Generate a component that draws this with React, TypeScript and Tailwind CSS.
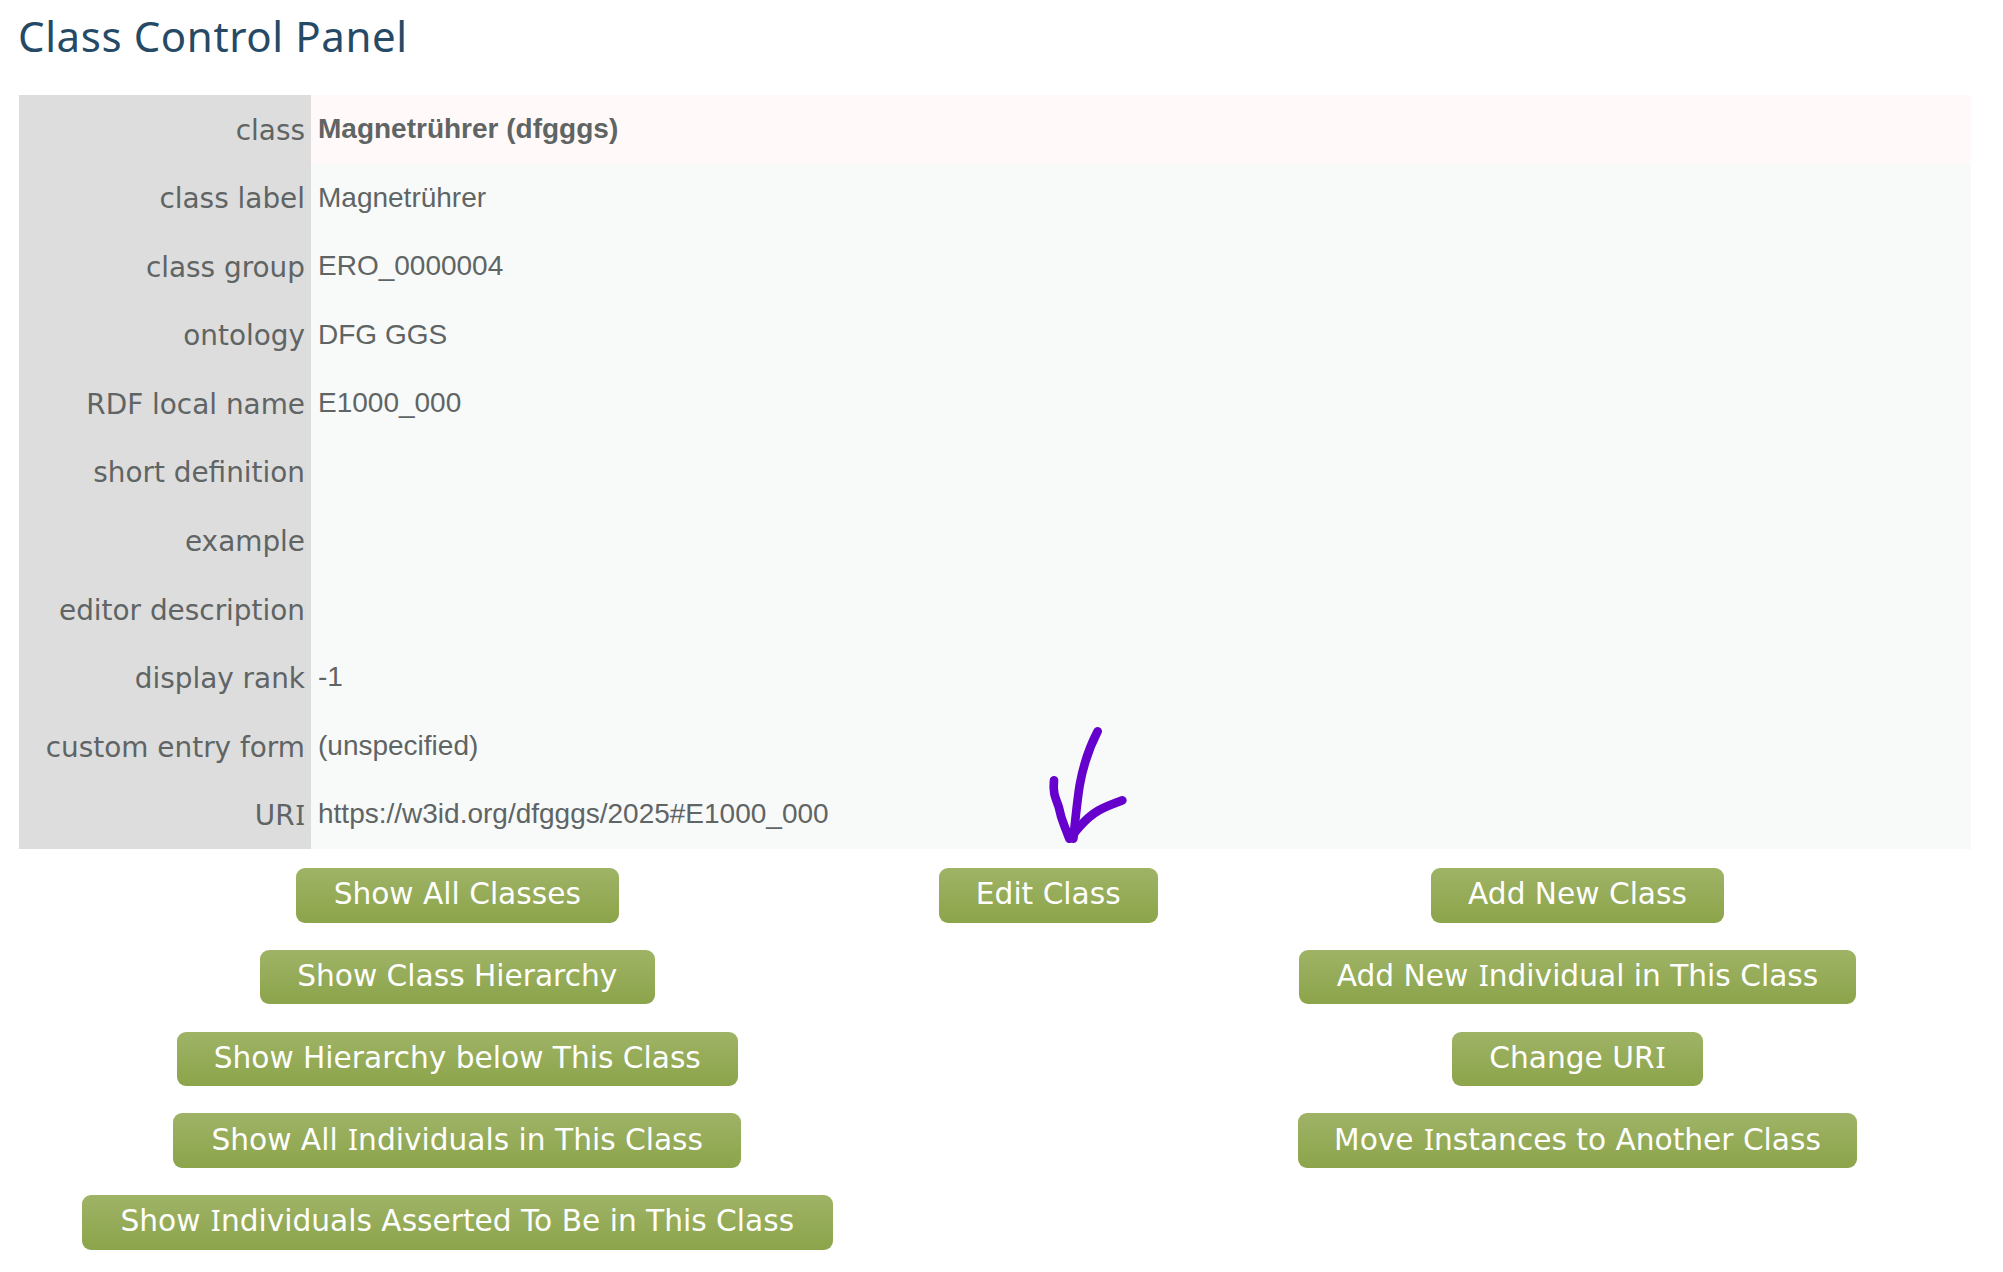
import { Fragment } from "react";

type Row = { label: string; value: string; strong?: boolean };

const rows: Row[] = [
  { label: "class", value: "Magnetrührer (dfgggs)", strong: true },
  { label: "class label", value: "Magnetrührer" },
  { label: "class group", value: "ERO_0000004" },
  { label: "ontology", value: "DFG GGS" },
  { label: "RDF local name", value: "E1000_000" },
  { label: "short definition", value: "" },
  { label: "example", value: "" },
  { label: "editor description", value: "" },
  { label: "display rank", value: "-1" },
  { label: "custom entry form", value: "(unspecified)" },
  { label: "URI", value: "https://w3id.org/dfgggs/2025#E1000_000" },
];

const browse = [
  { text: "Show All Classes", width: "w-[323px]" },
  { text: "Show Class Hierarchy", width: "w-[395px]" },
  { text: "Show Hierarchy below This Class", width: "w-[561px]" },
  { text: "Show All Individuals in This Class", width: "w-[568px]" },
  { text: "Show Individuals Asserted To Be in This Class", width: "w-[751px]" },
];

const edit = [{ text: "Edit Class", width: "w-[219px]" }];

const manage = [
  { text: "Add New Class", width: "w-[293px]" },
  { text: "Add New Individual in This Class", width: "w-[557px]" },
  { text: "Change URI", width: "w-[251px]" },
  { text: "Move Instances to Another Class", width: "w-[559px]" },
];

function Wording({ text }: { text: string }) {
  return (
    <span>
      {text.split("I").map((part, i) => (
        <Fragment key={i}>
          {i > 0 && <span className="pl-px font-['Noto_Sans',sans-serif] leading-none">I</span>}
          {part}
        </Fragment>
      ))}
    </span>
  );
}

function ButtonColumn({ items }: { items: { text: string; width: string }[] }) {
  return (
    <div className="flex flex-col items-center gap-[27.2px]">
      {items.map((b) => (
        <button
          key={b.text}
          className={`${b.width} h-[54.6px] rounded-[9px] bg-linear-to-b from-[#9fb366] to-[#8ca44a] pb-[2px] text-center font-['DejaVu_Sans',sans-serif] text-[29.65px] leading-[50px] whitespace-nowrap text-white`}
        >
          <Wording text={b.text} />
        </button>
      ))}
    </div>
  );
}

function Arrow() {
  return (
    <svg
      className="pointer-events-none absolute top-[700px] left-[1000px] h-[160px] w-[180px]"
      viewBox="0 0 540 480"
      fill="none"
      stroke="#6600cc"
      strokeWidth="26"
      strokeLinecap="round"
      strokeLinejoin="round"
    >
      <path d="M293 94C266 146 249 199 239 256C231 307 226 360 220 416" />
      <path d="M162 241C158 279 166 292 176 320C184 362 194 378 201 398L208 416" />
      <path d="M367 301C309 322 279 334 239 380C229 391 222 400 214 412" />
    </svg>
  );
}

export default function App() {
  return (
    <main className="relative h-[1272px] w-[2003px] overflow-hidden bg-white pl-[19px] text-[#5f6464]">
      <h1 className="-ml-px mb-[24px] font-['Noto_Sans',sans-serif] text-[42px] leading-[71px] tracking-[0.6px] text-[#264a66]">
        Class Control Panel
      </h1>
      <dl className="grid h-[754px] w-[1952px] auto-rows-fr grid-cols-[292px_1fr] text-[28px] leading-[34px]">
        {rows.map((r) => (
          <Fragment key={r.label}>
            <dt className="flex items-center justify-end bg-[#dddddd] pt-[3px] pr-[6px] font-['DejaVu_Sans',sans-serif] text-[27.9px]">
              <Wording text={r.label} />
            </dt>
            <dd
              className={`flex items-center pb-[0.5px] pl-[7px] font-['Liberation_Sans',sans-serif] ${
                r.strong ? "bg-[#fffaf9] font-bold" : "bg-[#f8faf9]"
              }`}
            >
              {r.value}
            </dd>
          </Fragment>
        ))}
      </dl>
      <div className="mt-[19px] grid grid-cols-[876.5px_305.5px_753px] items-start">
        <ButtonColumn items={browse} />
        <ButtonColumn items={edit} />
        <ButtonColumn items={manage} />
      </div>
      <Arrow />
    </main>
  );
}
